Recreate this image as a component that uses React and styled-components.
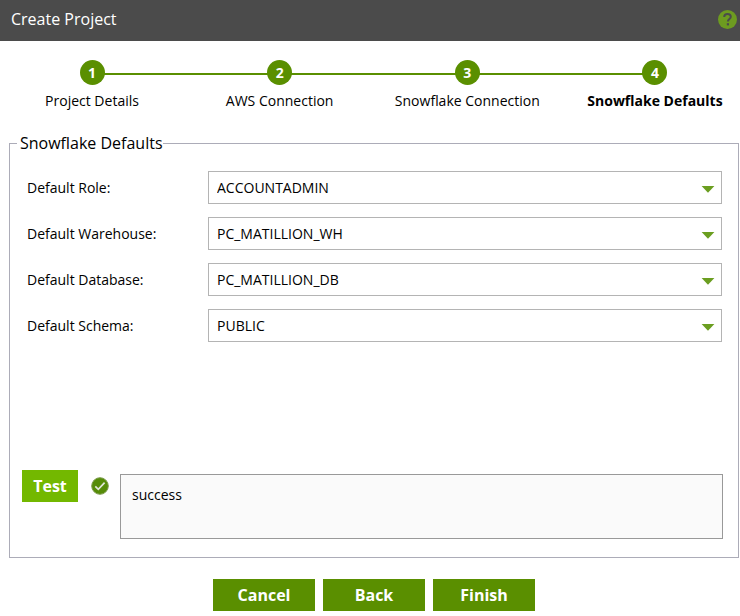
import React from "react";
import styled, { createGlobalStyle } from "styled-components";

const GlobalStyle = createGlobalStyle`
  *, *::before { box-sizing: border-box; }
  body {
    margin: 0;
    background: #fff;
    color: #000;
    font-family: "Open Sans", "Noto Sans", sans-serif;
    font-size: 14px;
    line-height: 20px;
  }
  button, select, textarea { font: inherit; color: inherit; }
`;

const Header = styled.header`
  display: flex;
  align-items: center;
  justify-content: space-between;
  height: 41px;
  padding: 0 3px 3px 11px;
  background: #4b4b4b;
  color: #fff;
`;

const Title = styled.h1`
  margin: 0;
  font-size: 16px;
  line-height: 22px;
  font-weight: 400;
`;

const HelpButton = styled.button`
  display: flex;
  padding: 0;
  border: 0;
  background: none;
  cursor: pointer;
`;

const Steps = styled.ol`
  position: relative;
  display: flex;
  justify-content: space-between;
  margin: 0;
  padding: 19px 10px 21px 17px;
  list-style: none;

  &::before {
    content: "";
    position: absolute;
    top: 32px;
    left: 92px;
    right: 85px;
    height: 2px;
    background: #5a8f00;
  }
`;

const Step = styled.li`
  position: relative;
  display: flex;
  flex-direction: column;
  align-items: center;
  gap: 6px;
  width: 150px;
  font-weight: ${({ $current }) => ($current ? 700 : 400)};
  white-space: nowrap;
`;

const StepNumber = styled.span`
  width: 25px;
  height: 25px;
  border-radius: 50%;
  background: #5a8f00;
  color: #fff;
  font-weight: 700;
  line-height: 25px;
  text-align: center;
`;

const Panel = styled.fieldset`
  min-width: 0;
  margin: 0 1px 0 9px;
  padding: 17px 15px 18px 7px;
  border: 1px solid #acacb8;
`;

const Legend = styled.legend`
  padding: 0 0 0 3px;
  font-size: 16px;
  line-height: 22px;
`;

const Fields = styled.div`
  display: grid;
  gap: 13px;
  padding: 0 1px 0 10px;
`;

const Field = styled.div`
  display: grid;
  grid-template-columns: 181px 1fr;
  align-items: center;
`;

const SelectBox = styled.div`
  position: relative;
`;

const Select = styled.select`
  display: block;
  width: 100%;
  height: 33px;
  padding: 0 32px 0 8px;
  border: 1px solid #b4b4b4;
  border-radius: 0;
  background: #fff;
  appearance: none;
`;

const Arrow = styled.svg`
  position: absolute;
  top: 15px;
  right: 7px;
  pointer-events: none;
`;

const TestRow = styled.div`
  display: flex;
  align-items: flex-start;
  margin-top: 128px;
  padding-left: 5px;
`;

const Button = styled.button`
  width: ${({ $test }) => ($test ? "56px" : "102px")};
  height: 32px;
  padding: 0;
  border: 0;
  background: ${({ $test }) => ($test ? "#73b800" : "#5a8f00")};
  color: #fff;
  font-size: 16px;
  font-weight: 700;
  cursor: pointer;
`;

const Status = styled.svg`
  flex: none;
  margin: 7px 11px 0 13px;
`;

const Result = styled.textarea`
  display: block;
  flex: 1;
  min-width: 0;
  height: 65px;
  margin-top: 4px;
  padding: 10px 11px;
  border: 1px solid #999;
  border-radius: 0;
  background: #fafafa;
  resize: none;
`;

const Footer = styled.footer`
  display: flex;
  justify-content: center;
  gap: 8px;
  padding: 21px 0 5px 8px;
`;

const steps = [
  "Project Details",
  "AWS Connection",
  "Snowflake Connection",
  "Snowflake Defaults",
];

const fields = [
  { id: "role", label: "Default Role:", value: "ACCOUNTADMIN" },
  { id: "warehouse", label: "Default Warehouse:", value: "PC_MATILLION_WH" },
  { id: "database", label: "Default Database:", value: "PC_MATILLION_DB" },
  { id: "schema", label: "Default Schema:", value: "PUBLIC" },
];

export default function App() {
  return (
    <>
      <GlobalStyle />
      <Header>
        <Title>Create Project</Title>
        <HelpButton type="button" aria-label="Help">
          <svg width="19" height="19" viewBox="0 0 19 19" fill="none">
            <circle cx="9.5" cy="9.5" r="9.5" fill="#6d9b20" />
            <path
              d="M6.2 7.1C6.2 5 7.6 3.9 9.5 3.9s3.3 1.1 3.3 2.8c0 2.2-2.9 2.4-2.9 4.8"
              stroke="#4b4b4b"
              strokeWidth="2"
            />
            <rect x="8.8" y="13.2" width="2.2" height="2.2" fill="#4b4b4b" />
          </svg>
        </HelpButton>
      </Header>
      <main>
        <Steps>
          {steps.map((name, i) => (
            <Step
              key={name}
              $current={i === 3}
              aria-current={i === 3 ? "step" : undefined}
            >
              <StepNumber>{i + 1}</StepNumber>
              <span>{name}</span>
            </Step>
          ))}
        </Steps>
        <Panel>
          <Legend>Snowflake Defaults</Legend>
          <Fields>
            {fields.map(({ id, label, value }) => (
              <Field key={id}>
                <label htmlFor={id}>{label}</label>
                <SelectBox>
                  <Select id={id} defaultValue={value}>
                    <option value={value}>{value}</option>
                  </Select>
                  <Arrow width="14" height="7" viewBox="0 0 14 7" aria-hidden="true">
                    <path d="M.6 0h12.8L7 6.8z" fill="#6b9e20" />
                  </Arrow>
                </SelectBox>
              </Field>
            ))}
          </Fields>
          <TestRow>
            <Button type="button" $test>
              Test
            </Button>
            <Status width="18" height="18" viewBox="0 0 18 18" fill="none" role="img" aria-label="Passed">
              <circle cx="9" cy="9" r="8.3" fill="#568c08" stroke="#7c9c4c" />
              <path d="M4.3 9.3l3 3 6.3-6.7" stroke="#e0e6d8" strokeWidth="1.7" />
            </Status>
            <Result aria-label="Test result" readOnly value="success" />
          </TestRow>
        </Panel>
      </main>
      <Footer>
        <Button type="button">Cancel</Button>
        <Button type="button">Back</Button>
        <Button type="button">Finish</Button>
      </Footer>
    </>
  );
}
